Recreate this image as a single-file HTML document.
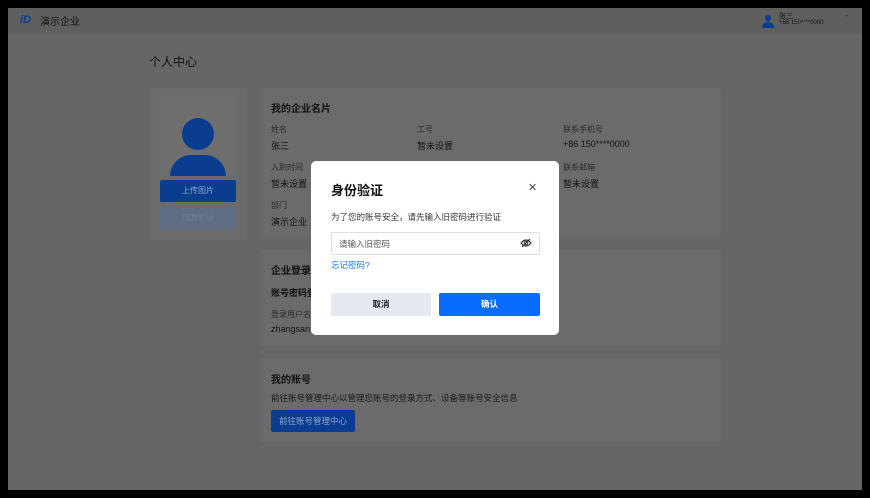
<!DOCTYPE html>
<html><head><meta charset="utf-8"><style>
*{margin:0;padding:0;box-sizing:border-box}
body{width:870px;height:498px;background:#000;font-family:"Liberation Sans","Noto Sans CJK SC",sans-serif;position:relative;overflow:hidden}
.a{position:absolute;white-space:nowrap}
.frame{position:absolute;left:8px;top:8px;width:854px;height:482px;background:#666;overflow:hidden}
.card{position:absolute;background:#6b6b6b;border-radius:3px}
.lbl{font-size:8px;color:#2a2a2a}
.val{font-size:9px;color:#111}
.h{font-size:10px;font-weight:bold;color:#111}
</style></head><body>
<div class="frame">
 <div class="a" style="left:0;top:0;width:854px;height:26px;background:#5f5f5f"></div>
 <div class="a" style="left:12px;top:6px;font-size:11px;font-weight:bold;color:#0a3d8f;font-style:italic">iD</div>
 <div class="a" style="left:32px;top:5px;font-size:10px;color:#111">演示企业</div>
 <svg class="a" style="left:753px;top:6px" width="14" height="14" viewBox="0 0 14 14"><circle cx="7" cy="4" r="3.2" fill="#0a3d8f"/><path d="M1 14 Q1 8 7 8 Q13 8 13 14Z" fill="#0a3d8f"/></svg>
 <div class="a" style="left:771px;top:3px;font-size:7px;color:#111">张三</div>
 <div class="a" style="left:771px;top:12px;font-size:6px;color:#111">+86 150****0000</div>
 <div class="a" style="left:836px;top:6px;font-size:7px;color:#333">⌃</div>
 <div class="a" style="left:141px;top:45px;font-size:12px;color:#111">个人中心</div>

 <div class="card" style="left:141px;top:80px;width:98px;height:152px"></div>
 <div class="a" style="left:152px;top:90px;width:76px;height:78px;background:#6e6e6e"></div>
 <div class="a" style="left:174px;top:110px;width:32px;height:32px;border-radius:50%;background:#0a3d8f"></div>
 <div class="a" style="left:162px;top:147px;width:56px;height:21px;border-radius:28px 28px 0 0;background:#0a3d8f"></div>
 <div class="a" style="left:152px;top:172px;width:76px;height:22px;background:#0a3d8f;border-radius:2px;color:#8ea6cc;font-size:8px;text-align:center;line-height:22px">上传图片</div>
 <div class="a" style="left:152px;top:199px;width:76px;height:22px;background:#5e6d84;border-radius:2px;color:#6f7f99;font-size:8px;text-align:center;line-height:22px">恢复默认</div>

 <div class="card" style="left:252px;top:80px;width:461px;height:149px"></div>
 <div class="a h" style="left:263px;top:92px">我的企业名片</div>
 <div class="a lbl" style="left:263px;top:116px">姓名</div><div class="a val" style="left:263px;top:131px">张三</div>
 <div class="a lbl" style="left:409px;top:116px">工号</div><div class="a val" style="left:409px;top:131px">暂未设置</div>
 <div class="a lbl" style="left:555px;top:116px">联系手机号</div><div class="a val" style="left:555px;top:131px">+86 150****0000</div>
 <div class="a lbl" style="left:263px;top:154px">入职时间</div><div class="a val" style="left:263px;top:169px">暂未设置</div>
 <div class="a lbl" style="left:555px;top:154px">联系邮箱</div><div class="a val" style="left:555px;top:169px">暂未设置</div>
 <div class="a lbl" style="left:263px;top:192px">部门</div><div class="a val" style="left:263px;top:207px">演示企业</div>

 <div class="card" style="left:252px;top:242px;width:461px;height:96px"></div>
 <div class="a h" style="left:263px;top:254px">企业登录方式</div>
 <div class="a" style="left:263px;top:278px;font-size:9px;font-weight:bold;color:#111">账号密码登录</div>
 <div class="a lbl" style="left:263px;top:301px">登录用户名</div><div class="a val" style="left:263px;top:316px">zhangsan</div>

 <div class="card" style="left:252px;top:350px;width:461px;height:84px"></div>
 <div class="a h" style="left:263px;top:363px">我的账号</div>
 <div class="a" style="left:263px;top:384px;font-size:8.5px;color:#1a1a1a">前往账号管理中心以管理您账号的登录方式、设备等账号安全信息</div>
 <div class="a" style="left:263px;top:402px;width:84px;height:22px;background:#0a3d8f;border-radius:2px;color:#8ea6cc;font-size:8.5px;text-align:center;line-height:22px">前往账号管理中心</div>

 <div class="a" style="left:303px;top:153px;width:248px;height:174px;background:#fff;border-radius:5px"></div>
 <div class="a" style="left:323px;top:172px;font-size:13px;font-weight:bold;color:#111">身份验证</div>
 <div class="a" style="left:520px;top:173px;font-size:11px;color:#444">✕</div>
 <div class="a" style="left:323px;top:203px;font-size:8.5px;color:#333">为了您的账号安全，请先输入旧密码进行验证</div>
 <div class="a" style="left:323px;top:224px;width:209px;height:23px;border:1px solid #dcdfe5;border-radius:2px"></div>
 <div class="a" style="left:331px;top:230px;font-size:8.5px;color:#555">请输入旧密码</div>
 <svg class="a" style="left:512px;top:230px" width="12" height="10" viewBox="0 0 12 10"><path d="M1 5 Q6 -1 11 5 Q6 11 1 5Z" fill="none" stroke="#333" stroke-width="1.2"/><circle cx="6" cy="5" r="1.8" fill="none" stroke="#333" stroke-width="1.1"/><path d="M2 9 L10 1" stroke="#333" stroke-width="1.2"/></svg>
 <div class="a" style="left:323px;top:251px;font-size:8.5px;color:#1a73e8">忘记密码?</div>
 <div class="a" style="left:323px;top:285px;width:100px;height:23px;background:#e5e8ee;border-radius:2px;font-size:8.5px;font-weight:bold;color:#222;text-align:center;line-height:23px">取消</div>
 <div class="a" style="left:431px;top:285px;width:101px;height:23px;background:#0a6cff;border-radius:2px;font-size:8.5px;font-weight:bold;color:#fff;text-align:center;line-height:23px">确认</div>
</div>
</body></html>
